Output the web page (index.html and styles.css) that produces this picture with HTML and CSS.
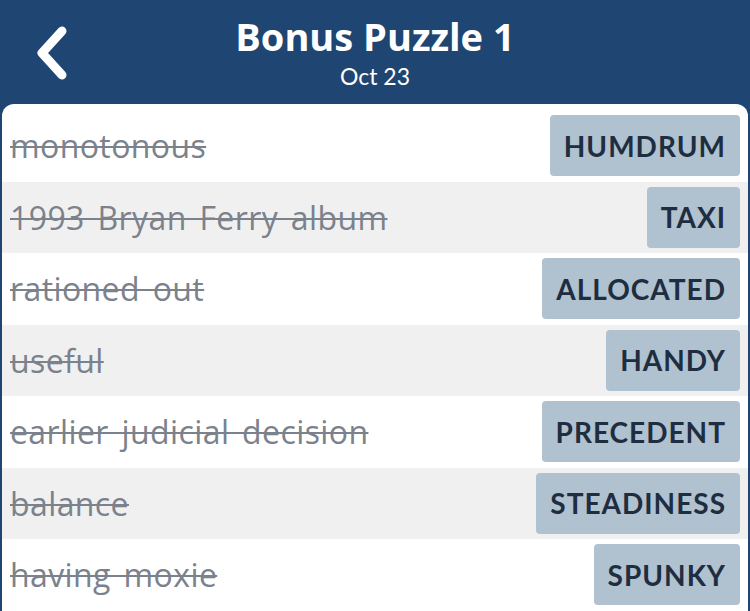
FILE: index.html
```html
<!DOCTYPE html>
<html lang="en">
<head>
  <meta charset="UTF-8">
  <meta name="viewport" content="width=device-width, initial-scale=1.0">
  <title>Bonus Puzzle 1</title>
  <link rel="stylesheet" href="styles.css">
</head>
<body>
  <header class="header">
    <a class="back" href="#" aria-label="Back">
      <svg width="40" height="56" viewBox="0 0 40 56">
        <path d="M31 6 L11 28 L31 50" fill="none" stroke="#ffffff" stroke-width="9" stroke-linecap="round" stroke-linejoin="round"/>
      </svg>
    </a>
    <div class="titles">
      <h1 class="title">Bonus Puzzle 1</h1>
      <div class="date">Oct 23</div>
    </div>
  </header>

  <main class="card">
    <div class="row">
      <span class="clue">monotonous</span>
      <span class="answer">HUMDRUM</span>
    </div>
    <div class="row">
      <span class="clue">1993 Bryan Ferry album</span>
      <span class="answer">TAXI</span>
    </div>
    <div class="row">
      <span class="clue">rationed out</span>
      <span class="answer">ALLOCATED</span>
    </div>
    <div class="row">
      <span class="clue">useful</span>
      <span class="answer">HANDY</span>
    </div>
    <div class="row">
      <span class="clue">earlier judicial decision</span>
      <span class="answer">PRECEDENT</span>
    </div>
    <div class="row">
      <span class="clue">balance</span>
      <span class="answer">STEADINESS</span>
    </div>
    <div class="row">
      <span class="clue">having moxie</span>
      <span class="answer">SPUNKY</span>
    </div>
  </main>
</body>
</html>
```

FILE: styles.css
```css
body {
  margin: 0;
  background-color: #1f4672;
  font-family: "Lato", "Open Sans", sans-serif;
  overflow: hidden;
}
.header {
  position: relative;
  height: 104px;
  display: flex;
  justify-content: center;
  color: #ffffff;
}
.back {
  position: absolute;
  left: 31px;
  top: 25px;
}
.titles {
  text-align: center;
  padding-top: 11px;
}
.title {
  margin: 0;
  font-family: "Open Sans", sans-serif;
  font-size: 38px;
  font-weight: 700;
  line-height: 50px;
  letter-spacing: 0;
}
.date {
  font-size: 23px;
  line-height: 28px;
  margin-top: 1px;
}
.card {
  background-color: #ffffff;
  margin: 0 2px;
  border-radius: 12px 12px 0 0;
  padding-top: 6px;
  min-height: 520px;
}
.row {
  height: 71.5px;
  box-sizing: border-box;
  display: flex;
  align-items: center;
  justify-content: space-between;
  padding: 5px 8px 5px 8px;
}
.row:nth-child(even) {
  background-color: #f0f0f0;
}
.clue {
  font-family: "Open Sans", sans-serif;
  font-size: 32px;
  letter-spacing: 0.4px;
  word-spacing: 4px;
  color: #7b828c;
  text-decoration: line-through;
  text-decoration-thickness: 2px;
}
.answer {
  height: 61px;
  display: flex;
  align-items: center;
  padding: 0 14px;
  background-color: #b0c1cf;
  border-radius: 4px;
  color: #1e2d3f;
  font-size: 28px;
  font-weight: 700;
  letter-spacing: 1px;
}
```
